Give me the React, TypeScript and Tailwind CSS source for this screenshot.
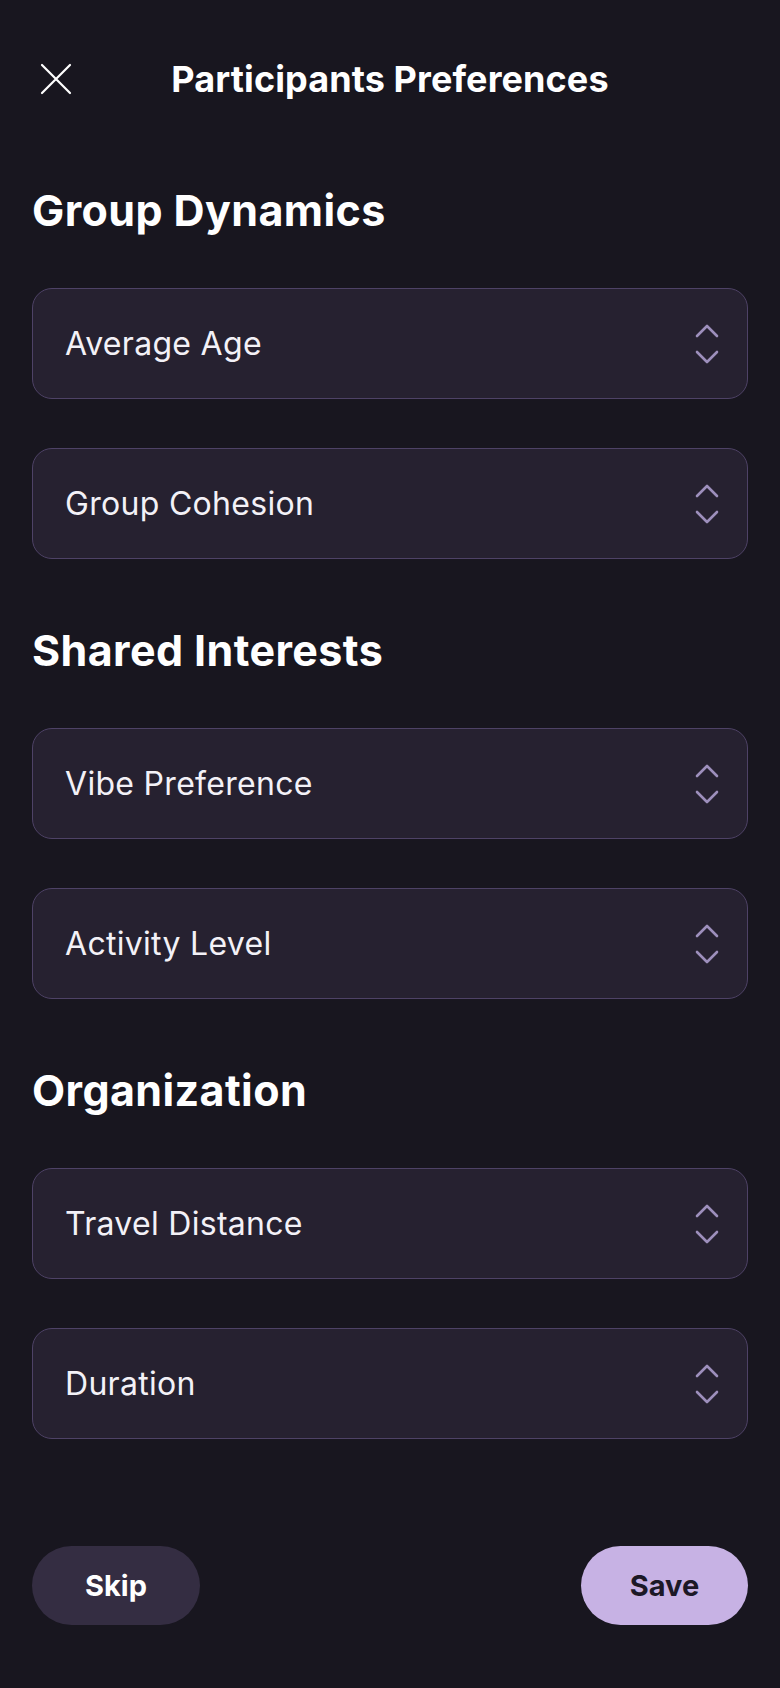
import { useState } from "react";

type Field = { id: string; label: string };
type Section = { title: string; fields: Field[] };

const sections: Section[] = [
  {
    title: "Group Dynamics",
    fields: [
      { id: "age", label: "Average Age" },
      { id: "cohesion", label: "Group Cohesion" },
    ],
  },
  {
    title: "Shared Interests",
    fields: [
      { id: "vibe", label: "Vibe Preference" },
      { id: "activity", label: "Activity Level" },
    ],
  },
  {
    title: "Organization",
    fields: [
      { id: "distance", label: "Travel Distance" },
      { id: "duration", label: "Duration" },
    ],
  },
];

function CloseIcon() {
  return (
    <svg width="32" height="32" viewBox="0 0 32 32" fill="none">
      <path d="M2 2L30 30M30 2L2 30" stroke="#ffffff" strokeWidth="2.2" strokeLinecap="round" />
    </svg>
  );
}

function UpDownIcon() {
  return (
    <svg width="24" height="42" viewBox="0 0 24 42" fill="none">
      <path d="M2 13L12 3L22 13" stroke="#9d8fbc" strokeWidth="2.6" strokeLinecap="round" strokeLinejoin="round" />
      <path d="M2 29L12 39L22 29" stroke="#9d8fbc" strokeWidth="2.6" strokeLinecap="round" strokeLinejoin="round" />
    </svg>
  );
}

function SelectRow({ label }: { label: string }) {
  return (
    <button className="flex h-[111px] w-full items-center justify-between rounded-[20px] border-[1.5px] border-[#4e4266] bg-[#262130] pl-[32px] pr-[28px] text-left">
      <span className="text-[32px] font-normal tracking-[0.3px] text-[#f3f1f7]">{label}</span>
      <UpDownIcon />
    </button>
  );
}

export default function App() {
  const [saved, setSaved] = useState(false);

  return (
    <div
      className="min-h-screen w-full bg-[#18161f] px-8 pb-[65px] text-white"
      style={{ fontFamily: "Inter, 'Noto Sans', sans-serif" }}
    >
      {/* ========== Header ============== */}
      <div className="grid grid-cols-[1fr_auto_1fr] items-center pt-[58px]">
        <button className="ml-2 flex h-[42px] w-[42px] items-center justify-start">
          <CloseIcon />
        </button>
        <h1 className="text-[36px] font-bold leading-[42px] tracking-[0.1px] text-white">
          Participants Preferences
        </h1>
        <div />
      </div>

      <div className="mt-[85px] flex flex-col gap-[66px]">
        {sections.map((section) => (
          <section key={section.title}>
            <h2 className="text-[43px] font-bold leading-[50px] tracking-[0.4px] text-white">
              {section.title}
            </h2>
            <div className="mt-[53px] flex flex-col gap-[49px]">
              {section.fields.map((f) => (
                <SelectRow key={f.id} label={f.label} />
              ))}
            </div>
          </section>
        ))}
      </div>

      <div className="mt-[107px] flex items-center justify-between">
        <button className="h-[79px] w-[168px] rounded-full bg-[#342d42] text-[29px] font-bold text-white">
          Skip
        </button>
        <button
          onClick={() => setSaved(!saved)}
          className="h-[79px] w-[167px] rounded-full bg-[#c7b2e4] text-[29px] font-bold text-[#1c1826]"
        >
          Save
        </button>
      </div>
    </div>
  );
}
